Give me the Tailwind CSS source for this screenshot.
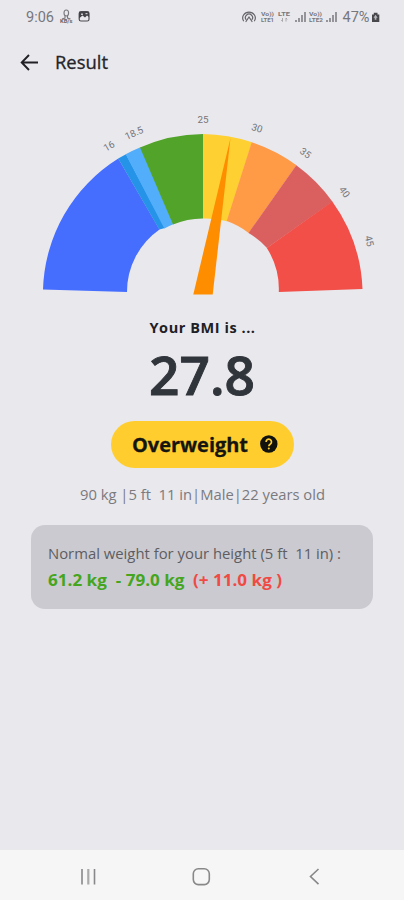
<!DOCTYPE html>
<html lang="en">
<head>
<meta charset="utf-8">
<meta name="viewport" content="width=device-width, initial-scale=1">
<title>Result</title>
<script src="https://cdn.jsdelivr.net/npm/@tailwindcss/browser@4"></script>
</head>
<body class="bg-[#e9e8ed]">
<div class="flex h-[900px] w-[404px] flex-col overflow-hidden bg-[#e9e8ed] font-['Open_Sans','Noto_Sans',sans-serif]">
  <header class="h-[34px] shrink-0">
    <svg class="block" width="404" height="34" viewBox="0 0 404 34" fill="none" font-family="Roboto, sans-serif">
      <text x="26" y="21.800" font-size="14.200" fill="#77777c" textLength="28" lengthAdjust="spacingAndGlyphs">9:06</text>
      <g stroke="#77777c" stroke-width="1.100">
        <ellipse cx="66.300" cy="13" rx="2.300" ry="3"/>
        <path d="M65 16v2l-3 1M67.500 16v2l3 1"/>
      </g>
      <text x="60" y="22.500" font-size="4.500" font-weight="700" fill="#66666b" textLength="12.500" lengthAdjust="spacingAndGlyphs">KB/s</text>
      <rect x="79.200" y="11.700" width="9.800" height="9.300" rx="1.800" stroke="#4b4b50" stroke-width="1.200"/>
      <path d="M79 12h10v5l-2-1.500-2 2-2.500-2L79 18.500z" fill="#424247"/>
      <path d="M81 13.500h2v1.500h-2zM85.500 13h2v1.200h-2z" fill="#c9c9ce"/>
      <g stroke="#66666b" stroke-width="1.200" stroke-linecap="round">
        <path d="M243.500 20.800a6.300 5.800 0 1 1 11 0M246 19.500a3.600 3.500 0 1 1 6 0"/>
        <path d="M246 21.500l3-4.500 3 4.500"/>
      </g>
      <g fill="#77777c" font-size="6" font-weight="700">
        <text x="261" y="16.300" textLength="13" lengthAdjust="spacingAndGlyphs">Vo))</text>
        <text x="261" y="22" textLength="13" lengthAdjust="spacingAndGlyphs">LTE1</text>
        <text x="278" y="16.300" textLength="12" lengthAdjust="spacingAndGlyphs">LTE</text>
        <text x="309" y="16.300" textLength="13" lengthAdjust="spacingAndGlyphs">Vo))</text>
        <text x="309" y="22" textLength="14" lengthAdjust="spacingAndGlyphs">LTE2</text>
      </g>
      <path d="M282.500 18v3.500m-1.300-1.300l1.300 1.300M286 21.500V18m0 0l1.300 1.300" stroke="#a0a0a5" stroke-width=".9"/>
      <path d="M296 20v2M299 18v4M302 15v7M305 12v10M327 20v2M330 18v4M333 15v7M336 12v10" stroke="#85858a" stroke-width="1.700"/>
      <text x="342.500" y="21.800" font-size="14.200" fill="#77777c" textLength="27" lengthAdjust="spacingAndGlyphs">47%</text>
      <path d="M372 14.500h1.800v-1.700h3.700v1.700h1.800v7.500H372z" fill="#47474c"/>
      <path d="M375.600 14.800l2 3h-1.200v2h-1.700v-2h-1.200z" fill="#b8b8bd"/>
    </svg>
  </header>

  <div class="flex h-14 shrink-0 items-center pl-5">
    <svg width="19" height="18" viewBox="0 0 19 18" fill="none" stroke="#202025" stroke-width="1.900" aria-label="Back"><path d="M18 9.500H2M9 2L1.700 9.500 9 17"/></svg>
    <h1 class="ml-4"><svg class="block" width="56" height="26"><text x="0" y="20" font-size="18" font-weight="500" fill="#242429" stroke="#242429" stroke-width=".3" textLength="53" lengthAdjust="spacingAndGlyphs">Result</text></svg></h1>
  </div>

  <main class="flex grow flex-col items-center">
    <svg class="block shrink-0" width="404" height="220" viewBox="0 90 404 220">
      <path fill="#456eff" d="M43 289.500A160 160 0 0 1 118.300 158.500L159.500 229.500A76 76 0 0 0 127 292z"/>
      <path fill="#2493e8" d="M118.200 158.600A160 160 0 0 1 126 154.200L165 228A76 76 0 0 0 159.300 229.500z"/>
      <path fill="#52adfa" d="M125.700 154.300A160 160 0 0 1 140.500 147.300L173.300 224.300A76 76 0 0 0 164.300 228.500z"/>
      <path fill="#52a32a" d="M140 147.500A160 160 0 0 1 203 134V218.500A76 76 0 0 0 173 224.500z"/>
      <path fill="#ffd032" d="M203 134A160 160 0 0 1 252 142.300L227 221.300A76 76 0 0 0 203 218.500z"/>
      <path fill="#ff9a47" d="M251.700 142.200A160 160 0 0 1 296.500 165.300L248.700 233A76 76 0 0 0 226.700 221z"/>
      <path fill="#da6060" d="M296.300 165.200A160 160 0 0 1 332.500 201.700L267 248A76 76 0 0 0 248.500 233z"/>
      <path fill="#f14f48" d="M332.300 201.500A160 160 0 0 1 362.500 289L278.800 292A76 76 0 0 0 266.800 248z"/>
      <path fill="#ff8d00" d="M230.500 138L212.700 294.500H193.300z"/>
      <g font-family="Roboto, sans-serif" font-size="9.800" fill="#75757a" text-anchor="middle">
        <text transform="translate(109 146) rotate(-31)" y="3.500">16</text>
        <text transform="translate(134 133) rotate(-24)" y="3.500" textLength="19">18.5</text>
        <text transform="translate(203 119.500)" y="3.500">25</text>
        <text transform="translate(257 128) rotate(18)" y="3.500">30</text>
        <text transform="translate(305.500 153) rotate(36)" y="3.500">35</text>
        <text transform="translate(344.500 192) rotate(54)" y="3.500">40</text>
        <text transform="translate(369.500 241) rotate(76)" y="3.500">45</text>
      </g>
    </svg>

    <svg class="block shrink-0" width="404" height="100">
      <text x="149.500" y="22.500" font-size="14.500" font-weight="700" fill="#202025" textLength="105.500">Your BMI is ...</text>
      <text x="149" y="84.500" font-size="52" font-weight="600" fill="#30343b" stroke="#30343b" stroke-width=".9" textLength="106" lengthAdjust="spacingAndGlyphs">27.8</text>
    </svg>

    <button class="mt-[11px] flex h-[47px] w-[183px] shrink-0 items-center rounded-full bg-[#ffce2e] pl-[21px]">
      <svg width="117" height="32" font-weight="700"><text x="0" y="23" font-size="19" fill="#151510" stroke="#151510" stroke-width=".3" textLength="116" lengthAdjust="spacingAndGlyphs">Overweight</text></svg>
      <svg class="-mt-0.5 ml-[11px]" width="18" height="18" viewBox="0 0 18 18"><circle cx="8.800" cy="9" r="8.700" fill="#11110e"/><path d="M6.100 6.900a2.700 2.700 0 1 1 4.200 2.200C9.300 9.800 8.800 10.100 8.800 11.200" fill="none" stroke="#ffce2e" stroke-width="1.700"/><circle cx="8.800" cy="13.500" r="1.050" fill="#ffce2e"/></svg>
    </button>

    <svg class="mt-3.5 block shrink-0" width="404" height="26"><text x="80" y="17.500" font-size="14.500" fill="#7a7a7f" textLength="245" lengthAdjust="spacingAndGlyphs" xml:space="preserve">90 kg |5 ft  11 in|Male|22 years old</text></svg>

    <section class="mt-[17px] h-[84px] w-[342px] shrink-0 rounded-[14px] bg-[#cbcad0] pt-[17px] pl-[17px]">
      <svg class="block" width="310" height="60">
        <text x="0" y="17" font-size="14.500" fill="#5d5d62" textLength="293" lengthAdjust="spacingAndGlyphs" xml:space="preserve">Normal weight for your height (5 ft  11 in) :</text>
        <g font-size="15.800" font-weight="700">
          <text x="0" y="44" fill="#45a51d" textLength="136.500" lengthAdjust="spacingAndGlyphs" xml:space="preserve">61.2 kg  - 79.0 kg</text>
          <text x="145" y="44" fill="#ef4a43" textLength="89" lengthAdjust="spacingAndGlyphs">(+ 11.0 kg )</text>
        </g>
      </svg>
    </section>
  </main>

  <nav class="h-[50px] shrink-0 bg-[#f6f6f6]">
    <svg class="block" width="404" height="50" fill="none" stroke="#88888a" stroke-width="1.600">
      <path d="M82 19v15.500M94.500 19v15.500"/><path d="M88.300 19v15.500" stroke="#aaa" stroke-width="2.200"/>
      <rect x="193.300" y="18.800" width="16" height="15.800" rx="5"/>
      <path d="M318.500 19l-8 7.500 8 7.700"/>
    </svg>
  </nav>
</div>
</body>
</html>
